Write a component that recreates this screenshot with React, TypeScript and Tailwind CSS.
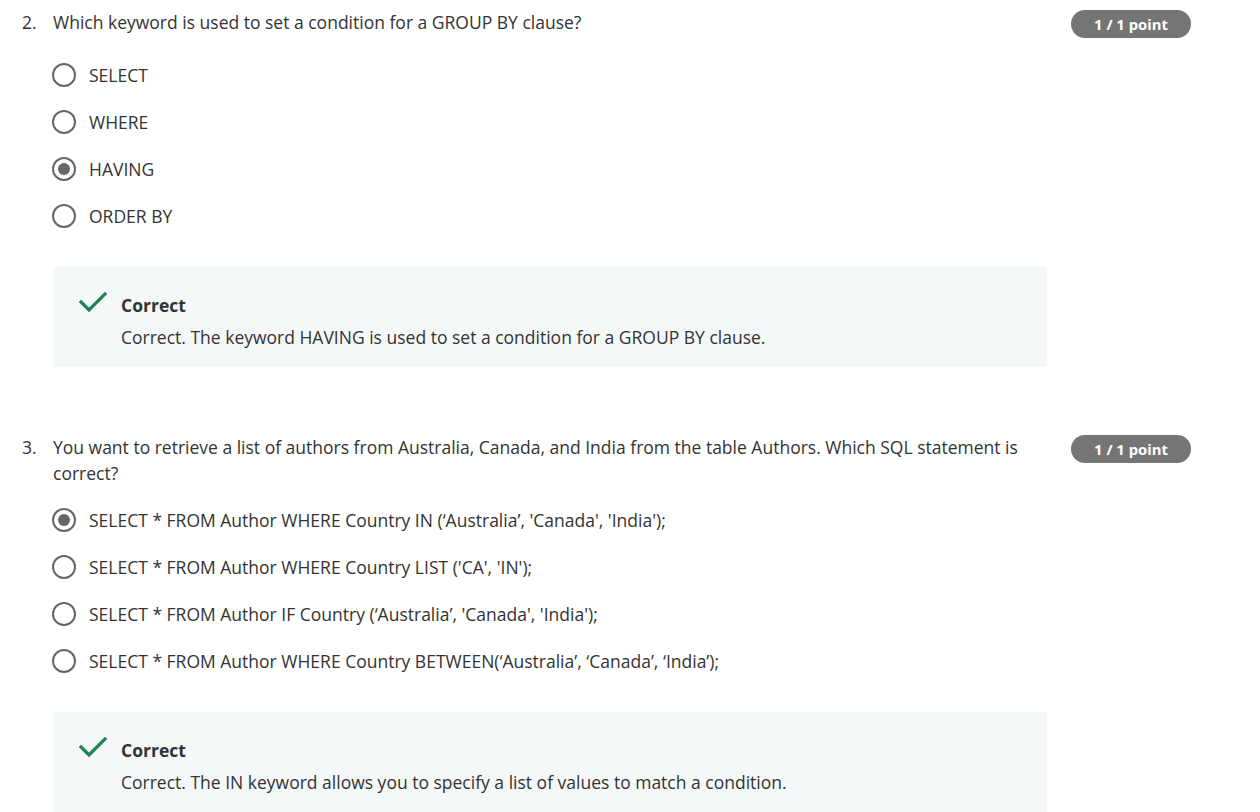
import React from 'react';

type Question = {
  num: string;
  text: string;
  options: string[];
  selected: number;
  explanation: string;
  optionsTop: string;
};

const QUESTIONS: Question[] = [
  {
    num: '2.',
    text: 'Which keyword is used to set a condition for a GROUP BY clause?',
    options: ['SELECT', 'WHERE', 'HAVING', 'ORDER BY'],
    selected: 2,
    explanation: 'Correct. The keyword HAVING is used to set a condition for a GROUP BY clause.',
    optionsTop: 'mt-[16px]',
  },
  {
    num: '3.',
    text: 'You want to retrieve a list of authors from Australia, Canada, and India from the table Authors. Which SQL statement is correct?',
    options: [
      "SELECT * FROM Author WHERE Country IN (\u2018Australia\u2019, 'Canada', 'India');",
      "SELECT * FROM Author WHERE Country LIST ('CA', 'IN');",
      "SELECT * FROM Author IF Country (\u2018Australia\u2019, 'Canada', 'India');",
      'SELECT * FROM Author WHERE Country BETWEEN(\u2018Australia\u2019, \u2018Canada\u2019, \u2018India\u2019);',
    ],
    selected: 0,
    explanation: 'Correct. The IN keyword allows you to specify a list of values to match a condition.',
    optionsTop: 'mt-[10px]',
  },
];

function Radio({ checked }: { checked: boolean }) {
  return (
    <span className="w-[24px] h-[24px] rounded-full border-2 border-[#666666] flex items-center justify-center shrink-0">
      {checked && <span className="w-[12px] h-[12px] rounded-full bg-[#666666]" />}
    </span>
  );
}

function CheckIcon() {
  return (
    <svg width="28" height="22" viewBox="0 0 28 22" className="shrink-0">
      <path d="M2 10 L10 18 L26 2" fill="none" stroke="#1f8354" strokeWidth="3.2" strokeLinecap="square" />
    </svg>
  );
}

function QuestionBlock({ q }: { q: Question }) {
  return (
    <div className="flex pl-[22px]">
      <div className="w-[31px] leading-[26px]">{q.num}</div>
      <div className="w-[994px]">
        <p className="leading-[26px]">{q.text}</p>
        <div className={q.optionsTop}>
          {q.options.map((opt, i) => (
            <div key={i} className="h-[47px] flex items-center gap-[13px] -ml-[1px]">
              <Radio checked={i === q.selected} />
              <span className="leading-[24px]">{opt}</span>
            </div>
          ))}
        </div>
        <div className="mt-[28px] bg-[#f5f8f8] pt-[25px] pb-[17px] pl-[26px] flex gap-[14px]">
          <CheckIcon />
          <div>
            <div className="font-bold leading-[26px] text-[#333333]">Correct</div>
            <div className="mt-[6px] leading-[26px]">{q.explanation}</div>
          </div>
        </div>
      </div>
      <div className="ml-[24px] pt-[1px]">
        <span className="inline-flex items-center justify-center w-[120px] h-[28px] rounded-full bg-[#757575] text-white text-[14.8px] font-bold">
          1 / 1 point
        </span>
      </div>
    </div>
  );
}

export default function App() {
  return (
    <div className="min-h-screen bg-white text-[#333333] text-[17.5px] pt-[9px] font-['Open_Sans',sans-serif]">
      <div className="flex flex-col gap-[67px]">
        {QUESTIONS.map((q) => (
          <QuestionBlock key={q.num} q={q} />
        ))}
      </div>
    </div>
  );
}
